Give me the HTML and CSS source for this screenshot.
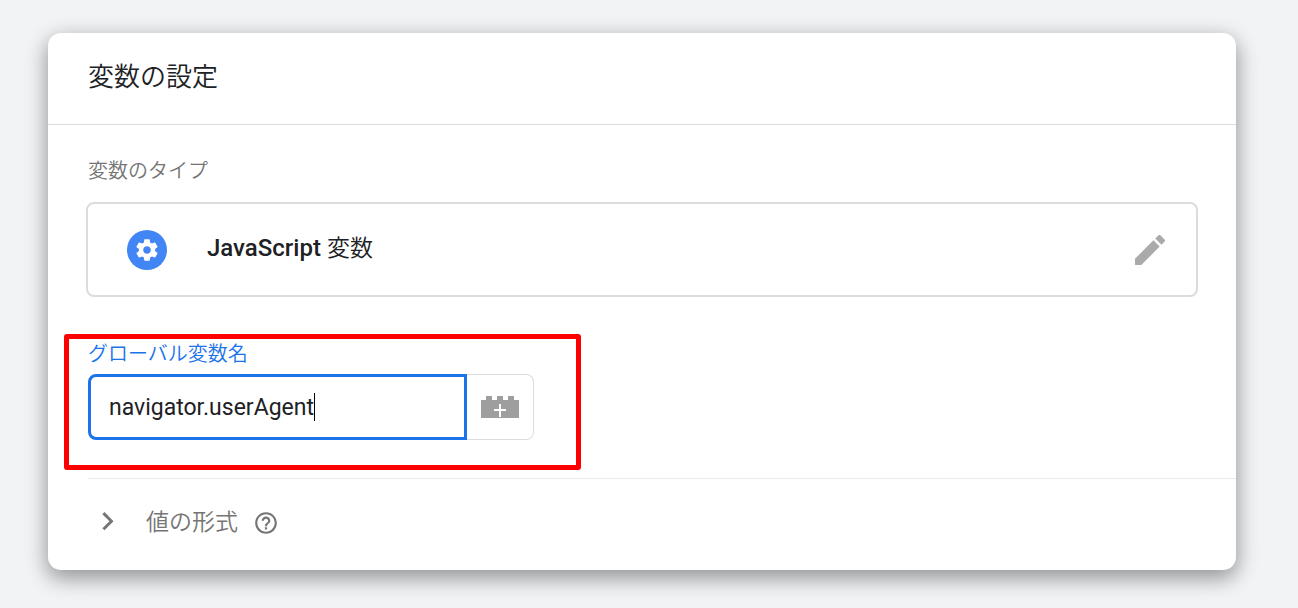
FILE: index.html
```html
<!DOCTYPE html>
<html lang="ja">
<head>
  <meta charset="UTF-8">
  <meta name="viewport" content="width=device-width, initial-scale=1.0">
  <title>変数の設定</title>
  <link rel="stylesheet" href="styles.css">
</head>
<body>
  <main class="card">
    <header class="card-header">
      <h1>変数の設定</h1>
    </header>

    <section class="card-body">
      <h2 class="label">変数のタイプ</h2>
      <div class="type-box">
        <span class="type-icon">
          <svg width="26" height="26" viewBox="0 0 24 24" fill="#fff"><path d="M19.43 12.98c.04-.32.07-.64.07-.98s-.03-.66-.07-.98l2.11-1.65c.19-.15.24-.42.12-.64l-2-3.46c-.12-.22-.39-.3-.61-.22l-2.49 1c-.52-.4-1.08-.73-1.69-.98l-.38-2.65C14.46 2.18 14.25 2 14 2h-4c-.25 0-.46.18-.49.42l-.38 2.65c-.61.25-1.17.59-1.69.98l-2.49-1c-.23-.09-.49 0-.61.22l-2 3.46c-.13.22-.07.49.12.64l2.11 1.65c-.04.32-.07.65-.07.98s.03.66.07.98l-2.11 1.65c-.19.15-.24.42-.12.64l2 3.46c.12.22.39.3.61.22l2.49-1c.52.4 1.08.73 1.69.98l.38 2.65c.03.24.24.42.49.42h4c.25 0 .46-.18.49-.42l.38-2.65c.61-.25 1.17-.59 1.69-.98l2.49 1c.23.09.49 0 .61-.22l2-3.46c.12-.22.07-.49-.12-.64l-2.11-1.65zM12 15.5c-1.93 0-3.5-1.57-3.5-3.5s1.57-3.5 3.5-3.5 3.5 1.57 3.5 3.5-1.57 3.5-3.5 3.5z"/></svg>
        </span>
        <span class="type-name">JavaScript <span class="type-kind">変数</span></span>
        <button class="edit-btn" type="button" aria-label="編集">
          <svg width="40" height="40" viewBox="0 0 24 24" fill="#aaa"><path d="M3 17.25V21h3.75L17.81 9.94l-3.75-3.75L3 17.25zM20.71 7.04c.39-.39.39-1.02 0-1.41l-2.34-2.34c-.39-.39-1.02-.39-1.41 0l-1.83 1.83 3.75 3.75 1.83-1.83z"/></svg>
        </button>
      </div>

      <div class="field">
        <label class="label active" for="var-name">グローバル変数名</label>
        <div class="field-row">
          <div class="input-wrap">
            <input id="var-name" type="text" value="navigator.userAgent">
            <span class="caret"></span>
          </div>
          <button class="brick-btn" type="button" aria-label="変数を選択">
            <svg width="38" height="22" viewBox="0 0 38 22"><path fill="#9e9e9e" d="M0 4h5V0h6v4h5V0h6v4h5V0h6v4h5v18H0z"/><path fill="#fff" d="M18 8h2v5h5v2h-5v6h-2v-6h-5v-2h5z"/></svg>
          </button>
        </div>
        <div class="highlight"></div>
      </div>
    </section>

    <section class="format">
      <button class="expand-btn" type="button">
        <svg class="chevron" width="40" height="40" viewBox="0 0 24 24" fill="#757575"><path d="M8.6 15.1l4.3-4.2-4.3-4.2L9.9 5.4l5.4 5.5-5.4 5.5z"/></svg>
        <span>値の形式</span>
      </button>
      <button class="help-btn" type="button" aria-label="ヘルプ">
        <svg width="26" height="26" viewBox="0 0 24 24" fill="#757575"><path d="M11 18h2v-2h-2v2zm1-16C6.48 2 2 6.48 2 12s4.48 10 10 10 10-4.48 10-10S17.52 2 12 2zm0 18c-4.41 0-8-3.59-8-8s3.59-8 8-8 8 3.59 8 8-3.59 8-8 8zm0-14c-2.21 0-4 1.79-4 4h2c0-1.1.9-2 2-2s2 .9 2 2c0 2-3 1.75-3 5h2c0-2.25 3-2.5 3-5 0-2.21-1.79-4-4-4z"/></svg>
      </button>
    </section>
  </main>
</body>
</html>
```

FILE: styles.css
```css
*{
  box-sizing: border-box;
  margin: 0;
  padding: 0;
}
body{
  background-color: #f1f3f4;
  color: #202124;
  font-family: Roboto, "Noto Sans CJK JP", sans-serif;
  padding: 33px 62px 38px 48px;
}
button{
  background: none;
  border: none;
  font: inherit;
  color: inherit;
}
svg{
  display: block;
}
.card{
  background-color: #fff;
  border-radius: 13px;
  box-shadow: 0 8px 20px rgba(0,0,0,0.25), 0 6px 24px rgba(0,0,0,0.2);
}
.card-header{
  padding: 24px 40px 27px;
  border-bottom: 1px solid #dadce0;
}
.card-header h1{
  font-size: 26px;
  font-weight: 350;
  line-height: 40px;
}
.card-body{
  padding: 31px 38px 38px 40px;
}
.label{
  display: block;
  font-size: 20px;
  font-weight: 350;
  line-height: 30px;
  color: #757575;
}
.active{
  color: #1a73e8;
}
.type-box{
  display: flex;
  align-items: center;
  height: 95px;
  margin: 16px 0 42px -2px;
  padding: 0 26px 0 39px;
  border: 2px solid #dadce0;
  border-radius: 8px;
}
.type-icon{
  display: flex;
  justify-content: center;
  align-items: center;
  width: 40px;
  height: 40px;
  border-radius: 50%;
  background-color: #4285f4;
}
.type-name{
  flex: 1;
  margin-left: 40px;
  padding-bottom: 2px;
  font-size: 24px;
  font-weight: 500;
  line-height: 32px;
}
.type-kind{
  font-size: 23px;
  font-weight: 350;
}
.field{
  position: relative;
}
.field-row{
  display: flex;
  margin-top: 5px;
}
.input-wrap{
  position: relative;
  width: 379px;
}
#var-name{
  display: block;
  width: 100%;
  height: 66px;
  padding: 0 18px;
  border: 3px solid #1a73e8;
  border-radius: 8px 0 0 8px;
  outline: none;
  font: 400 23px Roboto, sans-serif;
  color: #202124;
}
.caret{
  position: absolute;
  top: 19px;
  left: 226px;
  width: 1px;
  height: 28px;
  background-color: #000;
}
.brick-btn{
  display: flex;
  justify-content: center;
  align-items: center;
  width: 67px;
  height: 66px;
  border: 1px solid #dadce0;
  border-left: none;
  border-radius: 0 8px 8px 0;
}
.highlight{
  position: absolute;
  top: -5px;
  left: -24px;
  width: 517px;
  height: 136px;
  border: 5px solid #f00;
  border-radius: 3px;
  pointer-events: none;
}
.format{
  display: flex;
  align-items: center;
  height: 92px;
  margin-left: 40px;
  padding-bottom: 4px;
  border-top: 1px solid #e8eaed;
}
.expand-btn{
  display: flex;
  align-items: center;
  gap: 18px;
  font-size: 23px;
  font-weight: 350;
  line-height: 34px;
  color: #757575;
}
.help-btn{
  margin-left: 15px;
}
```
